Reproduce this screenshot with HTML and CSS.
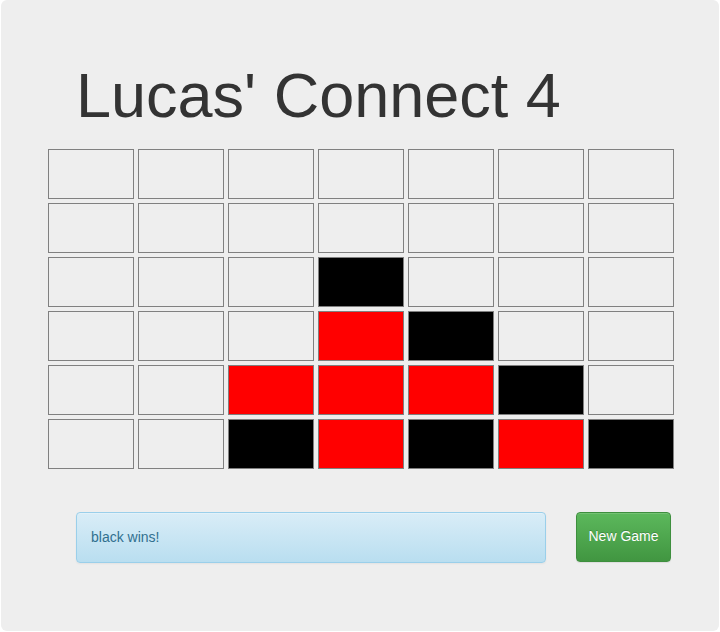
FILE: index.html
```html
<!DOCTYPE html>
<html>
<head>
<meta charset="utf-8">
<title>Lucas' Connect 4</title>
<link rel="stylesheet" href="styles.css">
</head>
<body>
<div class="jumbotron">
  <h1 class="title">Lucas' Connect 4</h1>
  <div class="board">
    <div class="cell"></div><div class="cell"></div><div class="cell"></div><div class="cell"></div><div class="cell"></div><div class="cell"></div><div class="cell"></div>
    <div class="cell"></div><div class="cell"></div><div class="cell"></div><div class="cell"></div><div class="cell"></div><div class="cell"></div><div class="cell"></div>
    <div class="cell"></div><div class="cell"></div><div class="cell"></div><div class="cell black"></div><div class="cell"></div><div class="cell"></div><div class="cell"></div>
    <div class="cell"></div><div class="cell"></div><div class="cell"></div><div class="cell red"></div><div class="cell black"></div><div class="cell"></div><div class="cell"></div>
    <div class="cell"></div><div class="cell"></div><div class="cell red"></div><div class="cell red"></div><div class="cell red"></div><div class="cell black"></div><div class="cell"></div>
    <div class="cell"></div><div class="cell"></div><div class="cell black"></div><div class="cell red"></div><div class="cell black"></div><div class="cell red"></div><div class="cell black"></div>
  </div>
  <div class="controls">
    <div class="alert">black wins!</div>
    <button class="btn-success" type="button">New Game</button>
  </div>
</div>
</body>
</html>
```
FILE: styles.css
```css
html, body {
  margin: 0;
  padding: 0;
  background: #fff;
}
body {
  font-family: "Liberation Sans", Arial, Helvetica, sans-serif;
  color: #333;
}
.jumbotron {
  margin: 0 1px;
  height: 631px;
  box-sizing: border-box;
  background: #eee;
  border-radius: 6px;
  padding-top: 61px;
}
.title {
  margin: 0 0 19px;
  padding-left: 75px;
  font-size: 63px;
  line-height: 69px;
  font-weight: 400;
  color: #333;
}
.board {
  margin-left: 47px;
  display: grid;
  grid-template-columns: repeat(7, 86px);
  grid-auto-rows: 50px;
  gap: 4px;
}
.cell {
  box-sizing: border-box;
  border: 1px solid #808080;
}
.cell.red { background: #f00; }
.cell.black { background: #000; }
.controls {
  margin-top: 43px;
  padding-left: 75px;
  display: flex;
  align-items: flex-start;
  gap: 30px;
}
.alert {
  box-sizing: border-box;
  width: 470px;
  height: 51px;
  padding: 14px 14px;
  font-size: 14px;
  line-height: 20px;
  color: #31708f;
  border: 1px solid #9acfea;
  border-radius: 4px;
  background-image: linear-gradient(to bottom, #d9edf7 0%, #b9def0 100%);
  box-shadow: inset 0 1px 0 rgba(255,255,255,.25), 0 1px 2px rgba(0,0,0,.05);
}
.btn-success {
  box-sizing: border-box;
  width: 95px;
  height: 50px;
  padding: 13px 0 15px;
  white-space: nowrap;
  text-align: center;
  font-family: "Liberation Sans", Arial, Helvetica, sans-serif;
  font-size: 14px;
  line-height: 20px;
  color: #fff;
  text-shadow: 0 -1px 0 rgba(0,0,0,.2);
  border: 1px solid #3e8f3e;
  border-radius: 4px;
  background-image: linear-gradient(to bottom, #5cb85c 0%, #419641 100%);
  box-shadow: inset 0 1px 0 rgba(255,255,255,.15), 0 1px 1px rgba(0,0,0,.075);
}
```
